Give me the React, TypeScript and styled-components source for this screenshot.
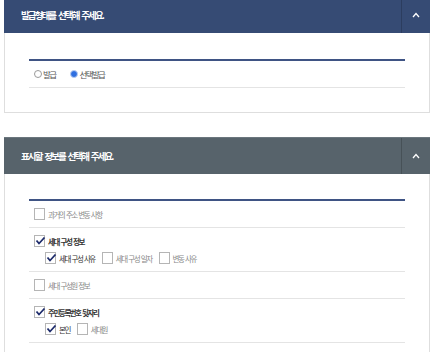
import React from "react";
import styled, { createGlobalStyle } from "styled-components";

const GlobalStyle = createGlobalStyle`
  body {
    margin: 0;
    background: #ffffff;
    font-family: "Noto Sans CJK KR", "Noto Sans", sans-serif;
  }
`;

const Page = styled.div`
  width: 426px;
  padding: 0 5px 0 4px;
  overflow: hidden;
  height: 352px;
`;

const Panel = styled.section<{ $first?: boolean }>`
  border: 1px solid #dedede;
  border-top: none;
  margin-top: ${(p) => (p.$first ? "-4px" : "24px")};
  background: #fff;
`;

const Header = styled.div<{ $tone: string }>`
  display: flex;
  align-items: stretch;
  height: 36px;
  margin: 0 -1px;
  background: ${(p) => p.$tone};
  border-top: 1px solid rgba(255, 255, 255, 0.12);
`;

const Title = styled.h2`
  flex: 1;
  margin: 0;
  padding-left: 17px;
  display: flex;
  align-items: center;
  color: #fff;
  font-size: 9.5px;
  font-weight: 700;
  letter-spacing: -1.9px;
  word-spacing: 2.5px;
  white-space: pre;
`;

const Toggle = styled.div`
  width: 28px;
  display: flex;
  align-items: center;
  justify-content: center;
  border-left: 1px solid rgba(0, 0, 0, 0.18);
`;

const Body = styled.div<{ $top: number; $bottom: number }>`
  padding: ${(p) => p.$top}px 24px ${(p) => p.$bottom}px;
`;

const NavyRule = styled.div`
  height: 2px;
  background: #3f5484;
`;

const Row = styled.div`
  padding: 7px 0 7px 5px;
  border-bottom: 1px solid #e4e4e4;
`;

const RadioRow = styled.div`
  display: flex;
  align-items: center;
  gap: 15px;
  height: 26px;
  padding-left: 5px;
  border-bottom: 1px solid #e4e4e4;
`;

const RadioItem = styled.label`
  display: flex;
  align-items: center;
  gap: 1px;
  font-size: 8.5px;
  letter-spacing: -1.6px;
  color: #555;
`;

const RadioDot = styled.span<{ $on?: boolean }>`
  width: 6px;
  height: 6px;
  border-radius: 50%;
  border: 1px solid ${(p) => (p.$on ? "#b9cdf0" : "#9a9a9a")};
  background: ${(p) => (p.$on ? "#2f6fe0" : "#fff")};
`;

const CheckLine = styled.div`
  display: flex;
  align-items: center;
  gap: 7px;
  height: 12px;
`;

const SubLine = styled(CheckLine)`
  margin-top: 5px;
  padding-left: 11px;
`;

const CheckItem = styled.label<{ $on?: boolean; $main?: boolean }>`
  display: flex;
  align-items: center;
  gap: 3px;
  font-size: 7.5px;
  letter-spacing: -1.5px;
  word-spacing: 1.5px;
  white-space: pre;
  color: ${(p) => (p.$on ? "#333" : "#888")};
  font-weight: ${(p) => (p.$main && p.$on ? 700 : 400)};
`;

const Box = styled.span`
  position: relative;
  width: 9px;
  height: 10px;
  border: 1px solid #b5b5b5;
  background: #fff;
  flex-shrink: 0;
`;

const Tick = styled.svg`
  position: absolute;
  left: 0;
  top: 0;
`;

const Chevron = () => (
  <svg width="8" height="6" viewBox="0 0 8 6">
    <path d="M1 5 L4 1.5 L7 5" fill="none" stroke="#fff" strokeWidth="1.3" />
  </svg>
);

const Check = ({ on, main, label }: { on?: boolean; main?: boolean; label: string }) => (
  <CheckItem $on={on} $main={main}>
    <Box>
      {on && (
        <Tick width="11" height="10" viewBox="0 0 11 10">
          <path d="M1.5 4.5 L4 7.5 L9.5 1.5" fill="none" stroke="#1c2a6b" strokeWidth="1.8" />
        </Tick>
      )}
    </Box>
    {label}
  </CheckItem>
);

export default function App() {
  return (
    <Page>
      <GlobalStyle />
      <Panel $first>
        <Header $tone="#364b74">
          <Title>발급형태를 선택해 주세요.</Title>
          <Toggle>
            <Chevron />
          </Toggle>
        </Header>
        <Body $top={26} $bottom={24}>
          <NavyRule />
          <RadioRow>
            <RadioItem>
              <RadioDot />
              발급
            </RadioItem>
            <RadioItem>
              <RadioDot $on />
              선택발급
            </RadioItem>
          </RadioRow>
        </Body>
      </Panel>

      <Panel>
        <Header $tone="#57636b">
          <Title>표시할 정보를 선택해 주세요.</Title>
          <Toggle>
            <Chevron />
          </Toggle>
        </Header>
        <Body $top={25} $bottom={20}>
          <NavyRule />
          <Row>
            <CheckLine>
              <Check label="과거의 주소 변동 사항" />
            </CheckLine>
          </Row>
          <Row>
            <CheckLine>
              <Check on main label="세대 구성 정보" />
            </CheckLine>
            <SubLine>
              <Check on label="세대 구성 사유" />
              <Check label="세대 구성 일자" />
              <Check label="변동 사유" />
            </SubLine>
          </Row>
          <Row>
            <CheckLine>
              <Check label="세대 구성원 정보" />
            </CheckLine>
          </Row>
          <Row>
            <CheckLine>
              <Check on main label="주민등록번호 뒷자리" />
            </CheckLine>
            <SubLine>
              <Check on label="본인" />
              <Check label="세대원" />
            </SubLine>
          </Row>
        </Body>
      </Panel>
    </Page>
  );
}
